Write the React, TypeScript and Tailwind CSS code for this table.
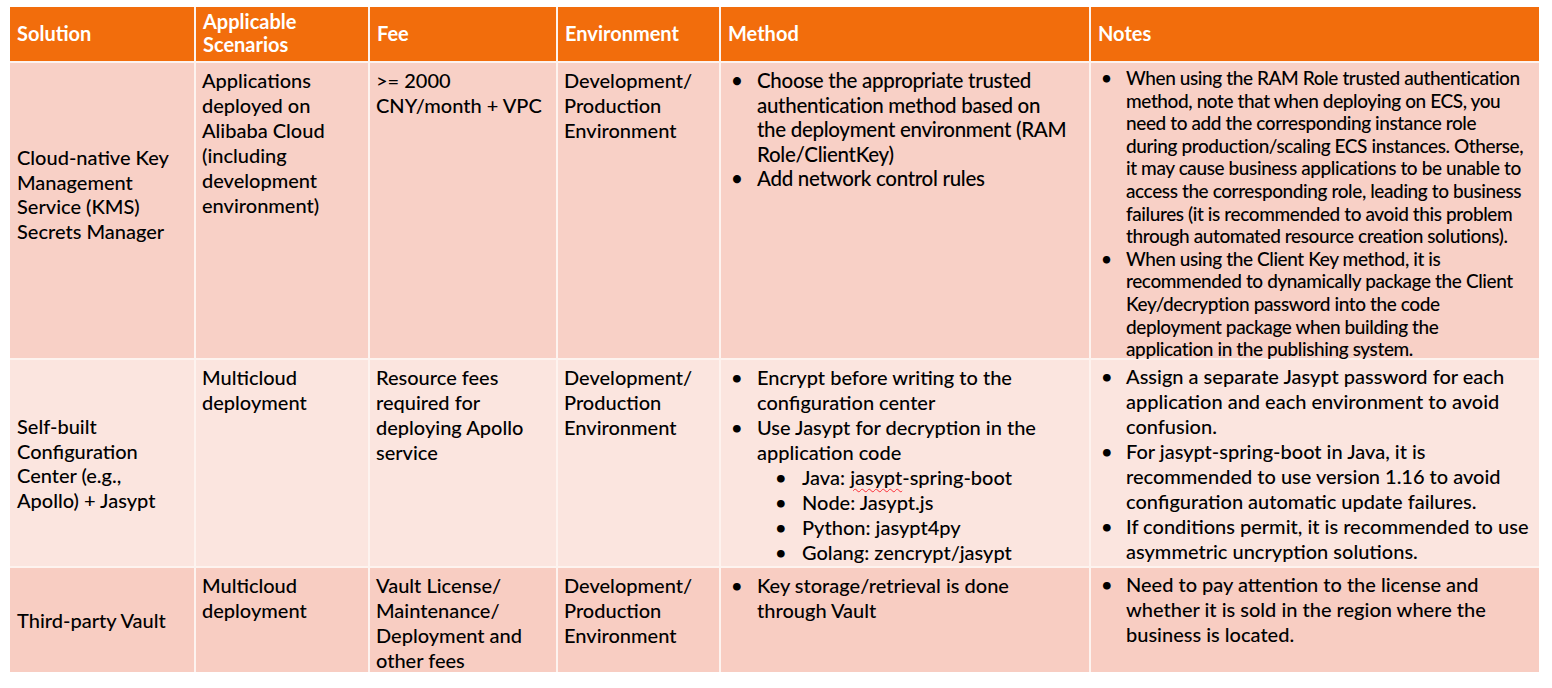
import React from "react"

type Item = { lines: string[]; sub?: string[] }

type Row = {
  bg: string
  solution: string[]
  solutionPad: string
  scenarios: string[]
  fee: string[]
  env: string[]
  method: Item[]
  methodText: string
  notes: Item[]
  notesText: string
}

const rows: Row[] = [
  {
    bg: "bg-[#f8d0c6]",
    solution: ["Cloud-native Key", "Management", "Service (KMS)", "Secrets Manager"],
    solutionPad: "pb-[33px]",
    scenarios: ["Applications", "deployed on", "Alibaba Cloud", "(including", "development", "environment)"],
    fee: [">= 2000", "CNY/month + VPC"],
    env: ["Development/", "Production", "Environment"],
    method: [
      {
        lines: [
          "Choose the appropriate trusted",
          "authentication method based on",
          "the deployment environment (RAM",
          "Role/ClientKey)",
        ],
      },
      { lines: ["Add network control rules"] },
    ],
    methodText: "text-[20.5px] leading-[24.5px] tracking-[-0.3px]",
    notes: [
      {
        lines: [
          "When using the RAM Role trusted authentication",
          "method, note that when deploying on ECS, you",
          "need to add the corresponding instance role",
          "during production/scaling ECS instances. Otherse,",
          "it may cause business applications to be unable to",
          "access the corresponding role, leading to business",
          "failures (it is recommended to avoid this problem",
          "through automated resource creation solutions).",
        ],
      },
      {
        lines: [
          "When using the Client Key method, it is",
          "recommended to dynamically package the Client",
          "Key/decryption password into the code",
          "deployment package when building the",
          "application in the publishing system.",
        ],
      },
    ],
    notesText: "text-[19px] leading-[22.6px] tracking-[-0.4px]",
  },
  {
    bg: "bg-[#fbe5df]",
    solution: ["Self-built", "Configuration", "Center (e.g.,", "Apollo) + Jasypt"],
    solutionPad: "",
    scenarios: ["Multicloud", "deployment"],
    fee: ["Resource fees", "required for", "deploying Apollo", "service"],
    env: ["Development/", "Production", "Environment"],
    method: [
      { lines: ["Encrypt before writing to the", "configuration center"] },
      {
        lines: ["Use Jasypt for decryption in the", "application code"],
        sub: ["Java: jasypt-spring-boot", "Node: Jasypt.js", "Python: jasypt4py", "Golang: zencrypt/jasypt"],
      },
    ],
    methodText: "text-[20px] leading-[25px]",
    notes: [
      {
        lines: [
          "Assign a separate Jasypt password for each",
          "application and each environment to avoid",
          "confusion.",
        ],
      },
      {
        lines: [
          "For jasypt-spring-boot in Java, it is",
          "recommended to use version 1.16 to avoid",
          "configuration automatic update failures.",
        ],
      },
      { lines: ["If conditions permit, it is recommended to use", "asymmetric uncryption solutions."] },
    ],
    notesText: "text-[20px] leading-[25px]",
  },
  {
    bg: "bg-[#f8cdc2]",
    solution: ["Third-party Vault"],
    solutionPad: "",
    scenarios: ["Multicloud", "deployment"],
    fee: ["Vault License/", "Maintenance/", "Deployment and", "other fees"],
    env: ["Development/", "Production", "Environment"],
    method: [{ lines: ["Key storage/retrieval is done", "through Vault"] }],
    methodText: "text-[20px] leading-[25px]",
    notes: [
      {
        lines: [
          "Need to pay attention to the license and",
          "whether it is sold in the region where the",
          "business is located.",
        ],
      },
    ],
    notesText: "text-[20px] leading-[25px]",
  },
]

function Lines({ lines }: { lines: string[] }) {
  return (
    <>
      {lines.map((l, i) => (
        <div key={i} className="whitespace-nowrap">
          {l}
        </div>
      ))}
    </>
  )
}

function SubLine({ text }: { text: string }) {
  // spell-check squiggle under "jasypt" in the Java line
  if (text.startsWith("Java: ")) {
    return (
      <span>
        Java:{" "}
        <span className="underline decoration-wavy decoration-red-500 decoration-1 underline-offset-[3px]">
          jasypt
        </span>
        -spring-boot
      </span>
    )
  }
  return <span>{text}</span>
}

function Bullets({ items, indent }: { items: Item[]; indent: string }) {
  return (
    <div>
      {items.map((item, i) => (
        <div key={i}>
          <div className="flex">
            <span className={`shrink-0 pl-[10px] ${indent}`}>•</span>
            <div>
              <Lines lines={item.lines} />
            </div>
          </div>
          {item.sub?.map((s, j) => (
            <div key={j} className="flex pl-[54px]">
              <span className="w-[27px] shrink-0">•</span>
              <div className="whitespace-nowrap">
                <SubLine text={s} />
              </div>
            </div>
          ))}
        </div>
      ))}
    </div>
  )
}

export default function App() {
  const headers = ["Solution", "Applicable Scenarios", "Fee", "Environment", "Method", "Notes"]

  return (
    <div
      className="h-[688px] w-[1552px] bg-white pl-[10px] pt-[7px] font-medium text-black"
      style={{ fontFamily: "Lato, 'Open Sans', sans-serif" }}
    >
      <div className="grid w-[1529px] grid-cols-[184px_172px_186px_161px_368px_448px] grid-rows-[54px_295px_206px_104px] gap-[2px] bg-[#fdf3ef]">
        {headers.map((h) => (
          <div
            key={h}
            className="flex items-center bg-[#f26d0c] px-[7px] pb-[2px] text-[20px] font-bold leading-[23px] text-white"
          >
            {h === "Applicable Scenarios" ? (
              <div>
                Applicable
                <br />
                Scenarios
              </div>
            ) : (
              h
            )}
          </div>
        ))}

        {rows.map((r, i) => (
          <React.Fragment key={i}>
            <div className={`flex items-center px-[7px] text-[20px] leading-[24.5px] ${r.bg} ${r.solutionPad}`}>
              <div>
                <Lines lines={r.solution} />
              </div>
            </div>
            <div className={`px-[6px] pt-[5px] text-[20px] leading-[25px] ${r.bg}`}>
              <Lines lines={r.scenarios} />
            </div>
            <div className={`px-[6px] pt-[5px] text-[20px] leading-[25px] ${r.bg}`}>
              <Lines lines={r.fee} />
            </div>
            <div className={`px-[6px] pt-[5px] text-[20px] leading-[25px] ${r.bg}`}>
              <Lines lines={r.env} />
            </div>
            <div className={`pt-[5px] ${r.methodText} ${r.bg}`}>
              <Bullets items={r.method} indent="w-[36px]" />
            </div>
            <div className={`pt-[4px] ${r.notesText} ${r.bg}`}>
              <Bullets items={r.notes} indent="w-[35px]" />
            </div>
          </React.Fragment>
        ))}
      </div>
    </div>
  )
}
